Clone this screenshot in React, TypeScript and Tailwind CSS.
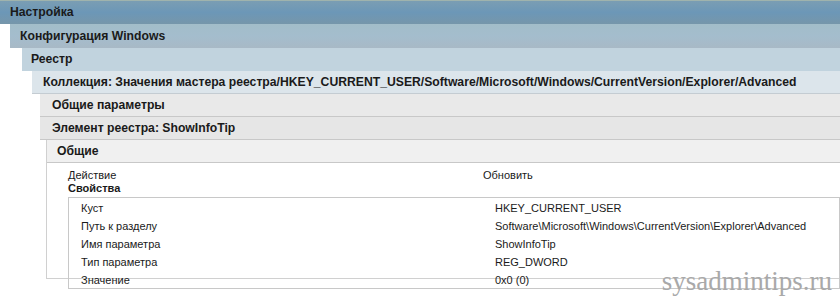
import React from "react";

const rows = [
  ["Куст", "HKEY_CURRENT_USER"],
  ["Путь к разделу", "Software\\Microsoft\\Windows\\CurrentVersion\\Explorer\\Advanced"],
  ["Имя параметра", "ShowInfoTip"],
  ["Тип параметра", "REG_DWORD"],
  ["Значение", "0x0 (0)"],
];

export default function App() {
  return (
    <div
      className="relative w-[840px] h-[305px] overflow-hidden bg-white text-[11px] text-[#1a1a1a]"
      style={{ fontFamily: '"Liberation Sans", Arial, sans-serif' }}
    >
      {/* Level 1 */}
      <div className="h-[24px] flex items-center pl-[10px] text-[12.2px] font-bold border-t border-[#9fb3ad] bg-gradient-to-b from-[#7a9db3] via-[#6c97b7] to-[#7696aa]">
        Настройка
      </div>
      <div className="pl-[10px]">
        <div className="h-[24px] flex items-center pl-[10px] text-[12.2px] font-bold bg-gradient-to-b from-[#a2bdc9] via-[#a4bdcd] to-[#a8b9c6]">
          Конфигурация Windows
        </div>
        <div className="pl-[12px]">
          <div className="h-[23px] flex items-center pl-[9px] text-[12.2px] font-bold bg-[#c1d3de]">
            Реестр
          </div>
          <div className="pl-[10px]">
            <div className="h-[23px] flex items-center pl-[11px] text-[12.2px] font-bold bg-[#dce5eb] border-b border-[#c4ccd2]">
              Коллекция: Значения мастера реестра/HKEY_CURRENT_USER/Software/Microsoft/Windows/CurrentVersion/Explorer/Advanced
            </div>
            <div className="pl-[8px]">
              <div className="h-[23px] flex items-center pl-[12px] text-[12.2px] font-bold bg-[#e9e9e9] border-b border-[#c8c8c8]">
                Общие параметры
              </div>
              <div className="h-[23px] flex items-center pl-[12px] text-[12.2px] font-bold bg-[#e6e6e6] border-b border-[#c8c8c8]">
                Элемент реестра: ShowInfoTip
              </div>
              <div className="pl-[6px]">
                <div className="border-l border-b border-[#d0d0d0] h-[139px]">
                  <div className="h-[23px] flex items-center pl-[10px] text-[12.2px] font-bold bg-[#f0f0f0] border-b border-[#c8c8c8]">
                    Общие
                  </div>
                  <div className="pl-[21px] pt-[6px]">
                    <div className="flex h-[13px] items-center">
                      <div className="w-[415px]">Действие</div>
                      <div>Обновить</div>
                    </div>
                    <div className="h-[13px] flex items-center font-bold">Свойства</div>
                    <div className="mt-[2px] border border-[#c8c8c8] h-[92px] pt-[1px]">
                      {rows.map(([k, v]) => (
                        <div key={k} className="flex h-[18px] items-center">
                          <div className="w-[426px] pl-[12px]">{k}</div>
                          <div>{v}</div>
                        </div>
                      ))}
                    </div>
                  </div>
                </div>
              </div>
            </div>
          </div>
        </div>
      </div>
      <div
        className="absolute right-[8px] top-[268px] text-[27px] leading-none text-[#a9a9a9]"
        style={{ fontFamily: '"Liberation Serif", "Times New Roman", serif' }}
      >
        sysadmintips.ru
      </div>
    </div>
  );
}
